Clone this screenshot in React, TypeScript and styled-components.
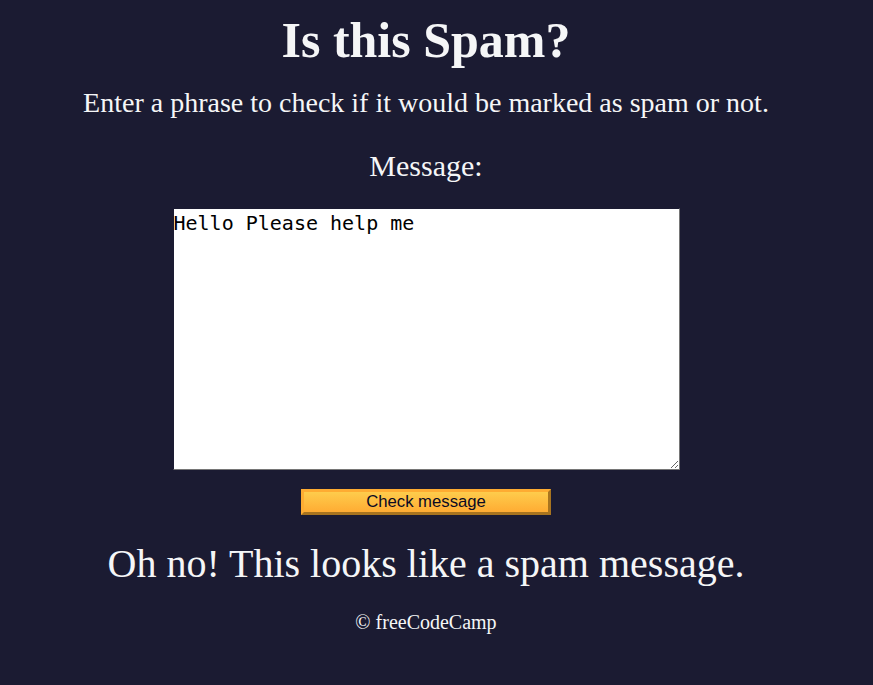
import React from "react";
import styled, { createGlobalStyle } from "styled-components";

const Global = createGlobalStyle`
  html, body { margin: 0; padding: 0; }
  body {
    background-color: #1b1b32;
    color: #f5f6f7;
    font-family: "Liberation Serif", "Times New Roman", serif;
  }
`;

const Main = styled.main`
  display: flex;
  flex-direction: column;
  align-items: center;
  text-align: center;
  padding: 10px 21px 0 0;
`;

const Title = styled.h1`
  font-size: 50px;
  font-weight: bold;
  margin: 0;
  line-height: 60px;
`;

const Description = styled.p`
  font-size: 28px;
  line-height: 32px;
  margin: 17px 0 0;
`;

const Label = styled.label`
  font-size: 30px;
  line-height: 34px;
  margin-top: 30px;
  display: block;
`;

const Area = styled.textarea`
  margin-top: 25px;
  width: 507px;
  height: 262px;
  box-sizing: border-box;
  font-family: "DejaVu Sans Mono", monospace;
  font-size: 20px;
  padding: 2px 1px 1px 0;
  border: 1px solid;
  border-color: #1b1b32 #767676 #767676 #1b1b32;
  background: #fff;
  color: #000;
  resize: both;
`;

const Button = styled.button`
  margin-top: 19px;
  width: 250px;
  height: 26px;
  font-family: "Liberation Sans", Arial, sans-serif;
  font-size: 16.7px;
  color: #0a0a23;
  background-color: #feac32;
  background-image: linear-gradient(#fecc4c, #ffac33);
  border: 3px solid;
  border-color: #feac32 #a8741f #a8741f #feac32;
  padding: 0;
  cursor: pointer;
`;

const Result = styled.p`
  font-size: 40px;
  line-height: 46px;
  margin: 26px 0 0;
`;

const Footer = styled.footer`
  font-size: 20px;
  line-height: 23px;
  margin-top: 24px;
`;

export default function App() {
  return (
    <>
      <Global />
      <Main>
        <Title>Is this Spam?</Title>
        <Description>
          Enter a phrase to check if it would be marked as spam or not.
        </Description>
        <Label htmlFor="message-input">Message:</Label>
        <Area id="message-input" defaultValue="Hello Please help me" />
        <Button type="button">Check message</Button>
        <Result>Oh no! This looks like a spam message.</Result>
        <Footer>© freeCodeCamp</Footer>
      </Main>
    </>
  );
}
